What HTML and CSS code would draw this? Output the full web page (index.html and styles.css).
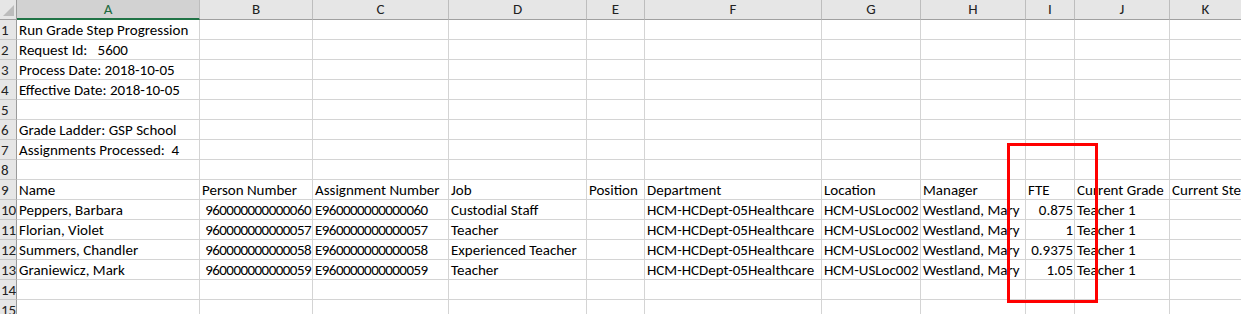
FILE: index.html
```html
<!DOCTYPE html>
<html>
<head>
<meta charset="utf-8">
<link rel="stylesheet" href="styles.css">
</head>
<body>
<div class="wrap">
<div class="sheet">
  <div class="ch corner"><span class="tri"></span></div>
  <div class="ch sel">A</div><div class="ch">B</div><div class="ch">C</div><div class="ch">D</div><div class="ch">E</div><div class="ch">F</div><div class="ch">G</div><div class="ch">H</div><div class="ch">I</div><div class="ch">J</div><div class="ch">K</div>

  <div class="rh">1</div><div class="c">Run Grade Step Progression</div><div class="c"></div><div class="c"></div><div class="c"></div><div class="c"></div><div class="c"></div><div class="c"></div><div class="c"></div><div class="c"></div><div class="c"></div><div class="c"></div>
  <div class="rh">2</div><div class="c">Request Id:   5600</div><div class="c"></div><div class="c"></div><div class="c"></div><div class="c"></div><div class="c"></div><div class="c"></div><div class="c"></div><div class="c"></div><div class="c"></div><div class="c"></div>
  <div class="rh">3</div><div class="c">Process Date: 2018-10-05</div><div class="c"></div><div class="c"></div><div class="c"></div><div class="c"></div><div class="c"></div><div class="c"></div><div class="c"></div><div class="c"></div><div class="c"></div><div class="c"></div>
  <div class="rh">4</div><div class="c">Effective Date: 2018-10-05</div><div class="c"></div><div class="c"></div><div class="c"></div><div class="c"></div><div class="c"></div><div class="c"></div><div class="c"></div><div class="c"></div><div class="c"></div><div class="c"></div>
  <div class="rh">5</div><div class="c"></div><div class="c"></div><div class="c"></div><div class="c"></div><div class="c"></div><div class="c"></div><div class="c"></div><div class="c"></div><div class="c"></div><div class="c"></div><div class="c"></div>
  <div class="rh">6</div><div class="c">Grade Ladder: GSP School</div><div class="c"></div><div class="c"></div><div class="c"></div><div class="c"></div><div class="c"></div><div class="c"></div><div class="c"></div><div class="c"></div><div class="c"></div><div class="c"></div>
  <div class="rh">7</div><div class="c">Assignments Processed:  4</div><div class="c"></div><div class="c"></div><div class="c"></div><div class="c"></div><div class="c"></div><div class="c"></div><div class="c"></div><div class="c"></div><div class="c"></div><div class="c"></div>
  <div class="rh">8</div><div class="c"></div><div class="c"></div><div class="c"></div><div class="c"></div><div class="c"></div><div class="c"></div><div class="c"></div><div class="c"></div><div class="c"></div><div class="c"></div><div class="c"></div>
  <div class="rh">9</div><div class="c">Name</div><div class="c">Person Number</div><div class="c">Assignment Number</div><div class="c">Job</div><div class="c">Position</div><div class="c">Department</div><div class="c">Location</div><div class="c">Manager</div><div class="c">FTE</div><div class="c">Current Grade</div><div class="c">Current Step</div>
  <div class="rh">10</div><div class="c">Peppers, Barbara</div><div class="c num id">960000000000060</div><div class="c id">E960000000000060</div><div class="c">Custodial Staff</div><div class="c"></div><div class="c">HCM-HCDept-05Healthcare</div><div class="c">HCM-USLoc002</div><div class="c">Westland, Mary</div><div class="c num">0.875</div><div class="c">Teacher 1</div><div class="c"></div>
  <div class="rh">11</div><div class="c">Florian, Violet</div><div class="c num id">960000000000057</div><div class="c id">E960000000000057</div><div class="c">Teacher</div><div class="c"></div><div class="c">HCM-HCDept-05Healthcare</div><div class="c">HCM-USLoc002</div><div class="c">Westland, Mary</div><div class="c num">1</div><div class="c">Teacher 1</div><div class="c"></div>
  <div class="rh">12</div><div class="c">Summers, Chandler</div><div class="c num id">960000000000058</div><div class="c id">E960000000000058</div><div class="c">Experienced Teacher</div><div class="c"></div><div class="c">HCM-HCDept-05Healthcare</div><div class="c">HCM-USLoc002</div><div class="c">Westland, Mary</div><div class="c num">0.9375</div><div class="c">Teacher 1</div><div class="c"></div>
  <div class="rh">13</div><div class="c">Graniewicz, Mark</div><div class="c num id">960000000000059</div><div class="c id">E960000000000059</div><div class="c">Teacher</div><div class="c"></div><div class="c">HCM-HCDept-05Healthcare</div><div class="c">HCM-USLoc002</div><div class="c">Westland, Mary</div><div class="c num">1.05</div><div class="c">Teacher 1</div><div class="c"></div>
  <div class="rh">14</div><div class="c"></div><div class="c"></div><div class="c"></div><div class="c"></div><div class="c"></div><div class="c"></div><div class="c"></div><div class="c"></div><div class="c"></div><div class="c"></div><div class="c"></div>
  <div class="rh">15</div><div class="c"></div><div class="c"></div><div class="c"></div><div class="c"></div><div class="c"></div><div class="c"></div><div class="c"></div><div class="c"></div><div class="c"></div><div class="c"></div><div class="c"></div>
</div>
<div class="highlight"></div>
</div>
</body>
</html>
```

FILE: styles.css
```css
html, body {
  margin: 0;
  padding: 0;
  background: #ffffff;
  overflow: hidden;
}

.wrap {
  position: relative;
  width: 1241px;
  height: 314px;
  overflow: hidden;
}

.sheet {
  display: grid;
  grid-template-columns: 17px 183px 113px 136px 138px 58px 177px 99px 105px 49px 95px 72px;
  grid-template-rows: 20px;
  grid-auto-rows: 20px;
  font-family: Carlito, Lato, "Liberation Sans", sans-serif;
  font-size: 15px;
  color: #000000;
}

.ch {
  box-sizing: border-box;
  background: #e6e6e6;
  border-right: 1px solid #bdbdbd;
  border-bottom: 1px solid #a0a0a0;
  text-align: center;
  line-height: 19px;
  color: #222222;
}

.ch.sel {
  background: #d2d2d2;
  color: #1e6b3f;
  border-bottom: 2px solid #217346;
  line-height: 18px;
}

.corner {
  position: relative;
  border-right: 1px solid #9b9b9b;
}

.tri {
  position: absolute;
  right: 2px;
  bottom: 3px;
  width: 0;
  height: 0;
  border-left: 11px solid transparent;
  border-bottom: 11px solid #bcbcbc;
}

.rh {
  box-sizing: border-box;
  background: #e6e6e6;
  border-right: 1px solid #9b9b9b;
  border-bottom: 1px solid #c8c8c8;
  padding-left: 1px;
  line-height: 21px;
  color: #222222;
  white-space: nowrap;
  overflow: hidden;
}

.c {
  box-sizing: border-box;
  border-right: 1px solid #d4d4d4;
  border-bottom: 1px solid #d4d4d4;
  padding: 0 1px 0 2px;
  line-height: 21px;
  white-space: pre;
  overflow: hidden;
}

.c.num {
  text-align: right;
}

.c.id {
  letter-spacing: -0.55px;
}

.highlight {
  position: absolute;
  left: 1007px;
  top: 143px;
  width: 91px;
  height: 160px;
  box-sizing: border-box;
  border: 3px solid #ff0000;
}
```
